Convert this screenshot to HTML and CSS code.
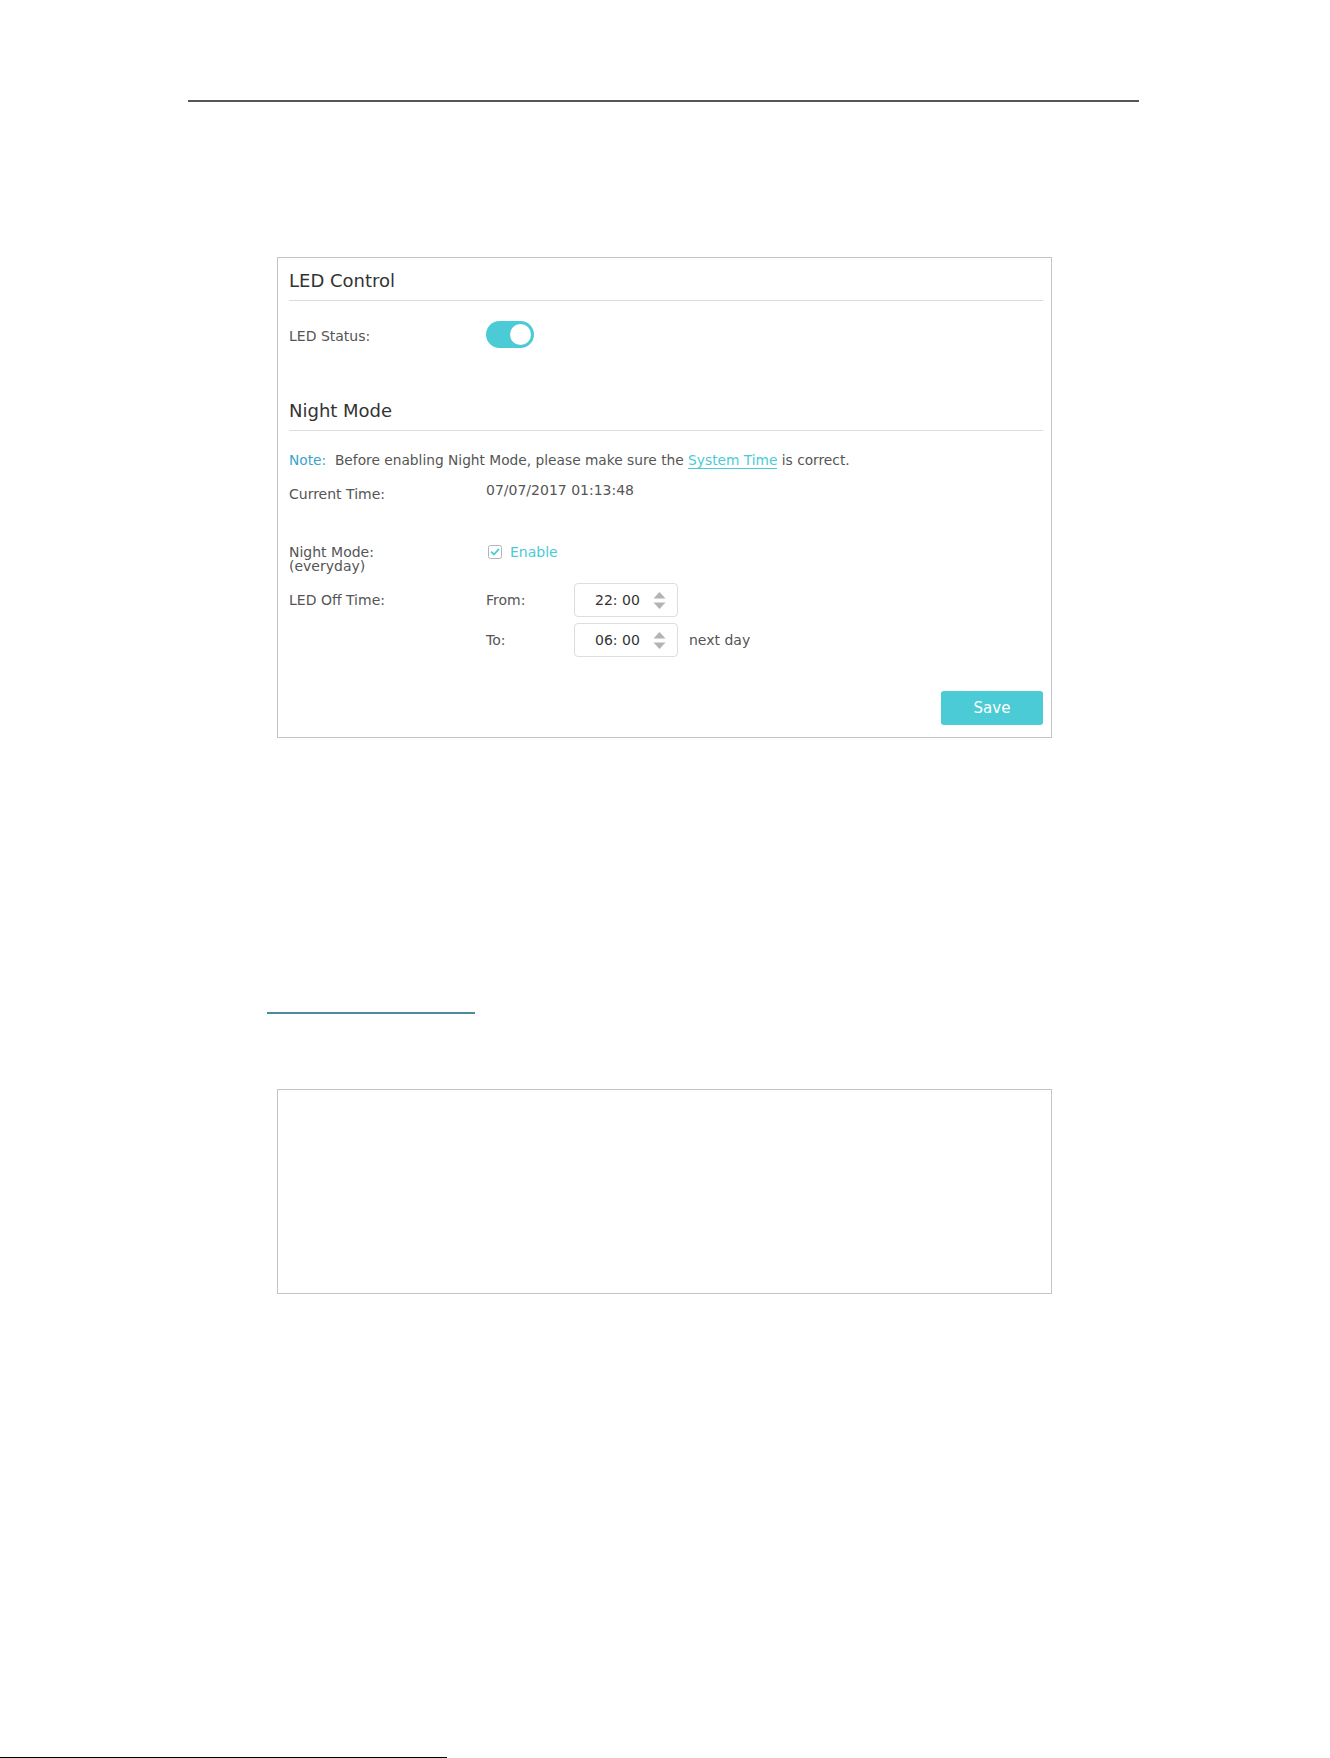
FILE: index.html
```html
<!DOCTYPE html>
<html lang="en">
<head>
  <meta charset="UTF-8" />
  <meta name="viewport" content="width=device-width, initial-scale=1.0" />
  <title>LED Control</title>
  <link rel="stylesheet" href="styles.css">
</head>
<body>
<div class="page">
  <div class="head-rule"></div>

  <section class="panel">
    <h3 class="panel-title">LED Control</h3>
    <div class="row row-led">
      <span class="label label-led">LED Status:</span>
      <span class="toggle on"><span class="knob"></span></span>
    </div>

    <h3 class="panel-title title-night">Night Mode</h3>
    <p class="note"><span class="note-tag">Note:</span>&nbsp; Before enabling Night Mode, please make sure the <a class="link" href="#">System Time</a> is correct.</p>

    <div class="row row-time">
      <span class="label label-low">Current Time:</span>
      <span class="value">07/07/2017 01:13:48</span>
    </div>

    <div class="row row-night">
      <span class="label label-tight">Night Mode:<br>(everyday)</span>
      <label class="check">
        <svg class="check-box" width="14" height="14" viewBox="0 0 14 14">
          <rect x="0.5" y="0.5" width="13" height="13" rx="2" fill="#fff" stroke="#b4b4b4"/>
          <path d="M3.6 7.2 L6 9.5 L10.6 4.4" fill="none" stroke="#4acbd6" stroke-width="1.8" stroke-linecap="round" stroke-linejoin="round"/>
        </svg>
        <span class="check-text">Enable</span>
      </label>
    </div>

    <div class="row row-off">
      <span class="label label-off">LED Off Time:</span>
      <div class="off-times">
        <div class="off-line">
          <span class="off-label">From:</span>
          <div class="spin">
            <span class="spin-value">22: 00</span>
            <svg class="spin-arrows" width="13" height="17" viewBox="0 0 13 17">
              <path d="M6.5 0 L12.5 6.5 L0.5 6.5 Z" fill="#b3b3b3"/>
              <path d="M0.5 10.5 L12.5 10.5 L6.5 17 Z" fill="#b3b3b3"/>
            </svg>
          </div>
        </div>
        <div class="off-line">
          <span class="off-label">To:</span>
          <div class="spin">
            <span class="spin-value">06: 00</span>
            <svg class="spin-arrows" width="13" height="17" viewBox="0 0 13 17">
              <path d="M6.5 0 L12.5 6.5 L0.5 6.5 Z" fill="#b3b3b3"/>
              <path d="M0.5 10.5 L12.5 10.5 L6.5 17 Z" fill="#b3b3b3"/>
            </svg>
          </div>
          <span class="after">next day</span>
        </div>
      </div>
    </div>

    <div class="actions">
      <button class="btn-save">Save</button>
    </div>
  </section>

  <div class="link-rule"></div>

  <section class="panel panel-empty"></section>

  <div class="foot-rule"></div>
</div>
</body>
</html>
```

FILE: styles.css
```css
body {
  margin: 0;
  padding: 0;
  background: #fff;
  font-family: "DejaVu Sans", Verdana, sans-serif;
  font-size: 14px;
  color: #555;
}
.page {
  display: flex;
  flex-direction: column;
  align-items: flex-start;
  width: 1330px;
  height: 1758px;
  overflow: hidden;
}
.head-rule {
  margin: 100px 0 0 188px;
  width: 951px;
  height: 2px;
  flex-shrink: 0;
  background: #565656;
}

/* settings panels */
.panel {
  box-sizing: border-box;
  width: 775px;
  flex-shrink: 0;
  margin: 155px 0 0 277px;
  padding: 0 8px 12px 11px;
  border: 1px solid #c4c4c4;
  background: #fff;
}
.panel-title {
  margin: 0;
  padding: 11px 0 7px;
  line-height: 24px;
  font-size: 18px;
  font-weight: normal;
  color: #333;
  border-bottom: 1px solid #dcdcdc;
}
.title-night {
  margin-top: 40px;
}
.row {
  display: flex;
  align-items: center;
  line-height: 20px;
}
.label {
  width: 197px;
  flex-shrink: 0;
}
.row-led {
  margin-top: 20px;
}
.label-led {
  padding-top: 3px;
}
.toggle {
  display: inline-flex;
  align-items: center;
  justify-content: flex-end;
  box-sizing: border-box;
  width: 48px;
  height: 27px;
  padding: 0 3px;
  border-radius: 14px;
  background: #4acbd6;
}
.knob {
  width: 21px;
  height: 21px;
  border-radius: 50%;
  background: #fff;
}
.note {
  margin: 19px 0 0;
  line-height: 20px;
  font-size: 13.75px;
  color: #555;
}
.note-tag {
  color: #3aa3c9;
}
.link {
  color: #4acbd6;
  text-decoration: none;
  border-bottom: 1px solid #4acbd6;
}
.row-time {
  margin-top: 10px;
  align-items: flex-start;
}
.label-low {
  padding-top: 4px;
}
.value {
  color: #555;
}
.row-night {
  margin-top: 41px;
  align-items: flex-start;
}
.label-tight {
  line-height: 14px;
}
.check {
  display: flex;
  align-items: center;
  gap: 8px;
  margin-left: 2px;
  line-height: 14px;
}
.check-text {
  color: #4acbd6;
}
.row-off {
  margin-top: 10px;
  align-items: flex-start;
}
.label-off {
  line-height: 34px;
}
.off-times {
  display: flex;
  flex-direction: column;
  gap: 6px;
}
.off-line {
  display: flex;
  align-items: center;
}
.off-label {
  width: 88px;
}
.spin {
  display: flex;
  align-items: center;
  box-sizing: border-box;
  width: 104px;
  height: 34px;
  padding: 0 11px 0 20px;
  border: 1px solid #dedede;
  border-radius: 4px;
  color: #333;
}
.spin-value {
  flex: 1;
}
.after {
  margin-left: 11px;
}
.actions {
  display: flex;
  justify-content: flex-end;
  margin-top: 34px;
}
.btn-save {
  width: 102px;
  height: 34px;
  border: none;
  border-radius: 3px;
  background: #4acbd6;
  color: #fff;
  font-family: "DejaVu Sans", Verdana, sans-serif;
  font-size: 15px;
  cursor: pointer;
}

.link-rule {
  margin: 274px 0 0 267px;
  width: 208px;
  height: 2px;
  flex-shrink: 0;
  background: #4a8c99;
}
.panel-empty {
  height: 205px;
  margin-top: 75px;
  padding: 0;
}
.foot-rule {
  margin-top: auto;
  width: 447px;
  height: 1px;
  flex-shrink: 0;
  background: #000;
}
```
